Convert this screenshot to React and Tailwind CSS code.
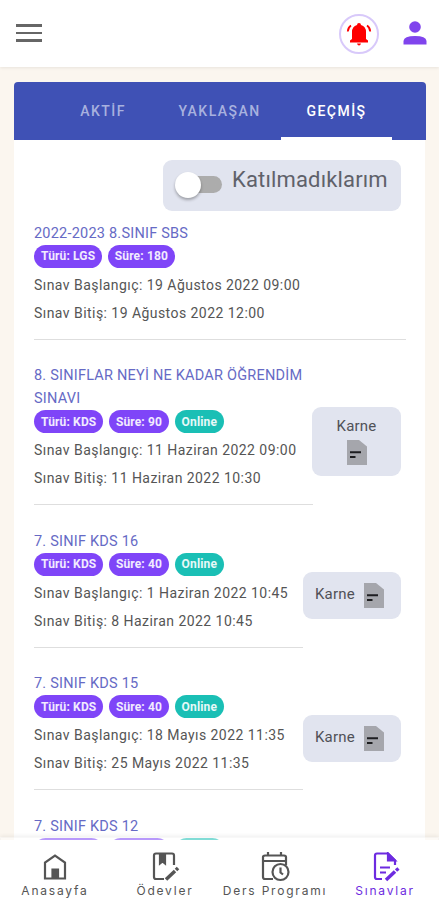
const exams = [
  { title: ["2022-2023 8.SINIF SBS"], type: "LGS", time: "180", start: "19 Ağustos 2022 09:00", end: "19 Ağustos 2022 12:00" },
  { title: ["8. SINIFLAR NEYİ NE KADAR ÖĞRENDİM", "SINAVI"], type: "KDS", time: "90", online: true, start: "11 Haziran 2022 09:00", end: "11 Haziran 2022 10:30", card: "tall" },
  { title: ["7. SINIF KDS 16"], type: "KDS", time: "40", online: true, start: "1 Haziran 2022 10:45", end: "8 Haziran 2022 10:45", card: "wide" },
  { title: ["7. SINIF KDS 15"], type: "KDS", time: "40", online: true, start: "18 Mayıs 2022 11:35", end: "25 Mayıs 2022 11:35", card: "wide" },
  { title: ["7. SINIF KDS 12"], type: "KDS", time: "40", online: true },
];

function ReportIcon() {
  return (
    <svg width="20" height="25" viewBox="0 0 20 25" className="shrink-0">
      <path d="M0 0H12L20 6.5V25H0Z" fill="#a5a6ac" />
      <path d="M3 12.2H14M3 17H8.5" stroke="#1d1d20" strokeWidth="2" />
    </svg>
  );
}

function Badge({ children, teal }) {
  return (
    <span className={`flex h-[23px] items-center rounded-full px-[7px] text-[12px] font-bold tracking-[0.15px] text-white/90 ${teal ? "bg-[#1abfb5]" : "bg-[#7f45f8]"}`}>
      {children}
    </span>
  );
}

function Exam({ exam }) {
  const width = exam.card === "tall" ? "w-[279px]" : exam.card === "wide" ? "w-[269px]" : "w-[372px]";
  return (
    <div className="flex shrink-0 items-start pb-[24.5px]">
      <div className={`${width} shrink-0 border-b border-[#dedede] pb-[12px]`}>
        {exam.title.map((line) => (
          <div key={line} className="h-[23px] text-[14.5px] leading-[23px] tracking-[0.22px] whitespace-nowrap text-[#666ac5]">{line}</div>
        ))}
        <div className="mb-[3px] flex gap-[5.5px]">
          <Badge>Türü: {exam.type}</Badge>
          <Badge>Süre: {exam.time}</Badge>
          {exam.online && <Badge teal>Online</Badge>}
        </div>
        {exam.start && (
          <div className="text-[14px] leading-[28px] tracking-[0.45px] whitespace-nowrap text-[#555]">
            <div>Sınav Başlangıç: {exam.start}</div>
            <div>Sınav Bitiş: {exam.end}</div>
          </div>
        )}
      </div>
      {exam.start && exam.card === "tall" && (
        <div className="mt-[43px] -ml-px flex h-[69px] w-[89px] flex-col items-center rounded-[9px] bg-[#e1e4ef] pt-[9px] text-[15px] leading-[20px] tracking-[0.2px] text-[#505157]">
          Karne
          <div className="mt-[4px]"><ReportIcon /></div>
        </div>
      )}
      {exam.start && exam.card === "wide" && (
        <div className="mt-[42.5px] flex h-[47px] w-[98px] items-center rounded-[9px] bg-[#e1e4ef] pl-[12px] text-[15px] tracking-[0.2px] text-[#505157]">
          <span className="w-[49px] pb-[2px]">Karne</span>
          <ReportIcon />
        </div>
      )}
    </div>
  );
}

function HomeIcon() {
  return (
    <svg width="30" height="30" viewBox="0 0 30 30" fill="none" stroke="currentColor" strokeWidth="2.2">
      <path d="M5 26.500V10.500L15 3.500L25 10.500V26.500Z" />
      <path d="M12.500 26V17.500H18V26" fill="currentColor" />
    </svg>
  );
}

function HomeworkIcon() {
  return (
    <svg width="30" height="30" viewBox="0 0 30 30" fill="none" stroke="currentColor" strokeWidth="2.2">
      <path d="M14 27H6Q4 27 4 25V3.500Q4 1.500 6 1.500H22Q24 1.500 24 3.500V13" />
      <path d="M10 2V11.500L12.500 9.500L15 11.500V2Z" fill="currentColor" />
      <path d="M16 27.500L25 19" strokeWidth="3.5" />
      <path d="M26 18L28 16" strokeWidth="3.5" />
    </svg>
  );
}

function ScheduleIcon() {
  return (
    <svg width="30" height="30" viewBox="0 0 30 30" fill="none" stroke="currentColor" strokeWidth="2.2">
      <path d="M13 27H5Q3 27 3 25V5Q3 3.500 5 3.500H24Q26 3.500 26 5V13M3 9H26M8 0V4M21 0V4" />
      <circle cx="20.500" cy="20" r="8" />
      <path d="M20.500 15.500V20.500L23 22.500" />
    </svg>
  );
}

function ExamIcon() {
  return (
    <svg width="30" height="30" viewBox="0 0 30 30" fill="none" stroke="currentColor" strokeWidth="2.2">
      <path d="M12 27H7Q5 27 5 25V3.500Q5 1.500 7 1.500H18L25 8.500V13" />
      <path d="M18 1.500V8.500H25Z" fill="currentColor" />
      <path d="M10 15.500H20M10 20.500H16" />
      <path d="M16 28L25 19.500" strokeWidth="3.5" />
      <path d="M26 18.500L28.500 16.500" strokeWidth="3.5" />
    </svg>
  );
}

const nav = [
  { label: "Anasayfa", Icon: HomeIcon },
  { label: "Ödevler", Icon: HomeworkIcon },
  { label: "Ders Programı", Icon: ScheduleIcon },
  { label: "Sınavlar", Icon: ExamIcon, active: true },
];

export default function App() {
  return (
    <div className="flex h-[900px] w-[439px] flex-col overflow-hidden bg-[#fbf6ef] font-['Roboto',sans-serif]">
      <header className="z-10 flex h-[67px] shrink-0 items-center bg-white pr-[12px] pl-[16px] shadow-[0_1px_3px_rgba(0,0,0,0.08)]">
        <div className="flex w-[26px] flex-col gap-[5px] pb-px">
          <span className="h-[2.5px] bg-[#666]" />
          <span className="h-[2.5px] bg-[#666]" />
          <span className="h-[2.5px] bg-[#666]" />
        </div>
        <div className="ml-auto flex size-[40px] items-center justify-center rounded-full border-2 border-[#d8c9fa]">
          <svg width="26" height="24" viewBox="0 0 26 24" fill="#fe0000">
            <path d="M13 1Q15 1 15 3Q20 4.500 20 10V17L22 18.500V20.500H4V18.500L6 17V10Q6 4.500 11 3Q11 1 13 1Z" />
            <path d="M11 21.500H15Q14.500 23.500 13 23.500Q11.500 23.500 11 21.500Z" />
            <path d="M5 3.500Q2 5.500 1.800 9.500M21 3.500Q24 5.500 24.200 9.500" fill="none" stroke="#fe0000" strokeWidth="1.800" />
          </svg>
        </div>
        <svg className="mb-px ml-[24px]" width="24" height="24" viewBox="0 0 24 24" fill="#8044ed">
          <circle cx="12" cy="6" r="5.800" />
          <path d="M.5 23.500V20Q1 15 12 15Q23 15 23.500 20V23.500Z" />
        </svg>
      </header>

      <main className="flex min-h-0 flex-1 flex-col overflow-hidden px-[14px] pt-[15px]">
        <div className="flex h-[58px] w-[412px] shrink-0 rounded-t-[4px] bg-[#3f51b5] pl-[34px] text-[14px] font-medium tracking-[1.45px] text-[#a8b1df]">
          <div className="flex w-[110px] items-center justify-center">AKTİF</div>
          <div className="flex w-[123px] items-center justify-center">YAKLAŞAN</div>
          <div className="flex w-[111px] items-center justify-center border-b-[3px] border-white pt-[3px] text-white">GEÇMİŞ</div>
        </div>
        <div className="flex min-h-0 flex-1 flex-col overflow-hidden bg-white pr-[20px] pl-[20px]">
          <div className="mt-[20px] mb-[10.5px] ml-[129px] flex h-[51px] w-[238px] shrink-0 rounded-[9px] bg-[#e1e4ef] pl-[12px]">
            <div className="mt-[16px] flex h-[17px] w-[47px] items-center rounded-full bg-gradient-to-r from-transparent from-20% to-[#acacac] to-20%">
              <div className="size-[26px] rounded-full bg-white shadow-[0_2px_3px_rgba(0,0,0,0.3)]" />
            </div>
            <span className="ml-[10px] pt-[4px] text-[22px] leading-[32px] tracking-[0.15px] text-[#5f616a]">Katılmadıklarım</span>
          </div>
          {exams.map((exam) => <Exam key={exam.title[0]} exam={exam} />)}
        </div>
      </main>

      <nav className="z-10 -mt-[3px] flex h-[63px] shrink-0 border-t-[3px] border-white/45 bg-white bg-clip-padding shadow-[0_-1px_4px_rgba(0,0,0,0.07)]">
        {nav.map(({ label, Icon, active }) => (
          <div key={label} className={`flex w-[110px] shrink-0 flex-col items-center pt-[12px] ${active ? "text-[#6d2be0]" : "text-[#555]"}`}>
            <Icon />
            <span className="mt-px font-['Inter',sans-serif] text-[12px] leading-[16px] tracking-[1.8px] whitespace-nowrap">{label}</span>
          </div>
        ))}
      </nav>
    </div>
  );
}
